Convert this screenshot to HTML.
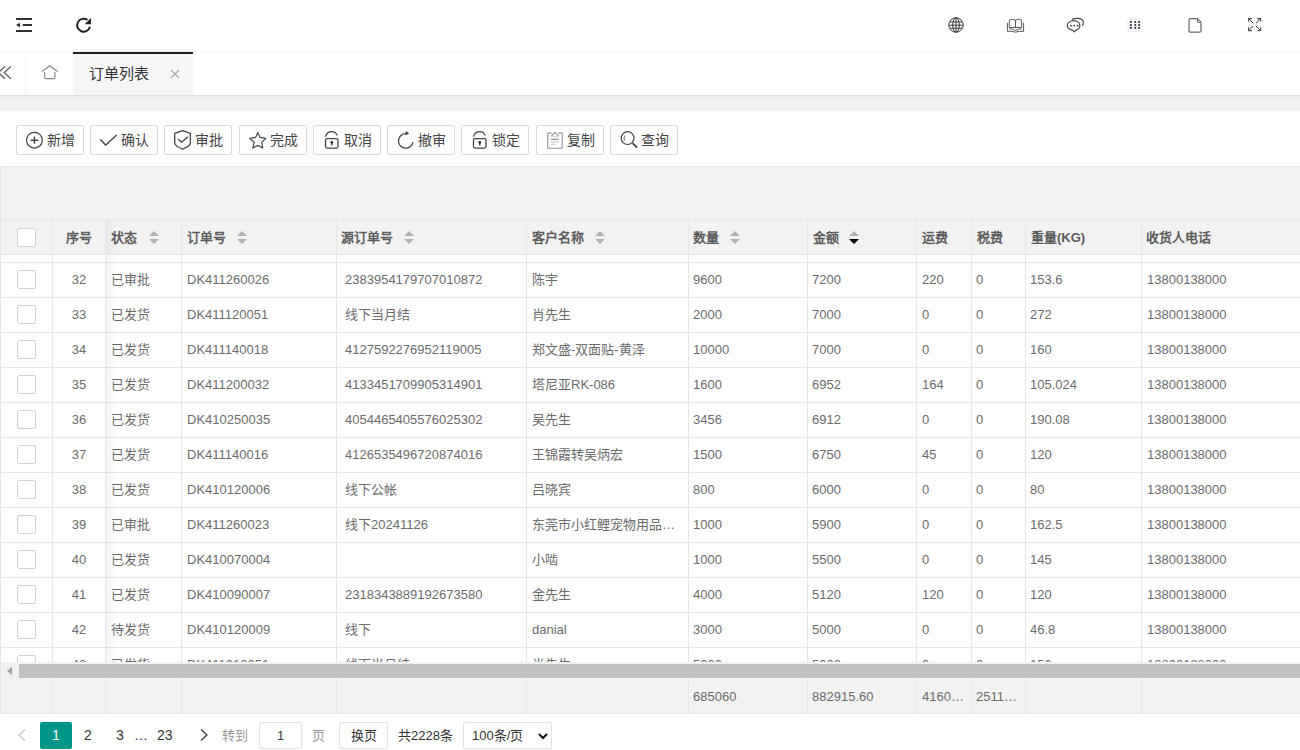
<!DOCTYPE html>
<html lang="zh-CN">
<head>
<meta charset="utf-8">
<title>订单列表</title>
<style>
*{margin:0;padding:0;box-sizing:border-box}
html,body{width:1300px;height:750px;overflow:hidden;background:#f2f2f2;font-family:"Liberation Sans",sans-serif;font-size:13px;color:#666}
svg{display:block;overflow:visible}
i,b,em,s{font-style:normal;text-decoration:none}
.a{position:absolute}
#hdr{position:absolute;left:0;top:0;width:1300px;height:52px;background:#fff;border-bottom:1px solid #f6f6f6}
#tabs{position:absolute;left:0;top:52px;width:1300px;height:44px;background:#fff;border-bottom:1px solid #e0e0e0;box-shadow:0 1px 2px rgba(0,0,0,.04)}
#tabs .lft{position:absolute;left:0;top:0;width:26px;height:43px;border-right:1px solid #f3f3f3}
#tabs .lft svg{position:absolute;left:0;top:14px}
#tabs .home{position:absolute;left:26px;top:0;width:47px;height:43px}
#tabs .home svg{position:absolute;left:15px;top:12px}
#tabs .cur{position:absolute;left:73px;top:0;width:120px;height:43px;background:#f6f6f6;border-top:2px solid #1f222b}
#tabs .cur>span{position:absolute;left:16px;top:10px;font-size:15px;line-height:20px;color:#333;white-space:nowrap}
#tabs .cur i{position:absolute;left:97px;top:15px}
#tool{position:absolute;left:0;top:111px;width:1300px;height:55px;background:#fff;border-radius:2px 0 0 0}
.btn{position:absolute;top:14px;height:30px;width:68px;border:1px solid #d9d9d9;border-radius:2px;background:#fff}
.btn svg.bi{position:absolute;left:-1px;top:-2px}
.btn>span{position:absolute;left:30px;top:5px;font-size:14px;line-height:18px;color:#444;white-space:nowrap}
#grid{position:absolute;left:0;top:166px;width:1300px;height:548px;background:#fff}
#gline{position:absolute;left:0;top:0;width:1300px;height:548px;border-top:1px solid #e6e6e6;border-left:1px solid #e6e6e6;pointer-events:none}
#gtool{position:absolute;left:0;top:1px;width:1300px;height:53px;background:#f2f2f2;border-bottom:1px solid #e6e6e6}
#thead{position:absolute;left:0;top:54px;width:1301px;height:35px;background:#f2f2f2;border-bottom:1px solid #e6e6e6}
.cb{position:absolute;width:19px;height:19px;border:1px solid #d2d2d2;border-radius:2px;background:#fff}
.th{position:absolute;top:1px;line-height:34px;font-weight:bold;color:#5c5c5c;white-space:nowrap}
.c{text-align:center}
.sort{position:absolute;top:11px;width:10px;height:14px}
.sort s{position:absolute;left:0;width:0;height:0;border-left:5px solid transparent;border-right:5px solid transparent}
.sort .up{top:0;border-bottom:5px solid #b2b2b2}
.sort .dn{top:8px;border-top:5px solid #b2b2b2}
.sort.act .dn{border-top-color:#000}
#tbody{position:absolute;left:0;top:89px;width:1301px;height:407px;overflow:hidden;background:#fff}
#rows{position:absolute;left:0;top:0;width:1301px}
.tr{position:absolute;left:0;width:1301px;height:35px;border-top:1px solid #e6e6e6}
.td{position:absolute;top:0;line-height:34px;white-space:nowrap;color:#6b6b6b}
.vl{position:absolute;top:-35px;width:1px;height:450px;background:#e6e6e6}
#thead .vl{top:0;height:35px}
.fixsh{position:absolute;left:106px;top:0;width:10px;height:100%;background:linear-gradient(90deg,rgba(0,0,0,.045),rgba(0,0,0,0))}
#hscroll{position:absolute;left:0;top:496px;width:1301px;height:16px;background:#f1f1f1}
#hscroll .arr{position:absolute;left:7px;top:5px;width:0;height:0;border-top:4px solid transparent;border-bottom:4px solid transparent;border-right:5px solid #a3a3a3}
#hscroll .thumb{position:absolute;left:19px;top:2px;width:1282px;height:14px;background:#c1c1c1}
#tfoot{position:absolute;left:0;top:512px;width:1301px;height:36px;background:#f2f2f2;border-bottom:1px solid #e6e6e6}
.vl2{position:absolute;top:0;width:1px;height:35px;background:#e6e6e6}
#tfoot .td{line-height:37px}
#pager{position:absolute;left:0;top:714px;width:1300px;height:36px;background:#fff}
#pager .pg{position:absolute;top:15px}
#pager .prev{left:18px}
#pager .next{left:200px}
.curp{position:absolute;left:40px;top:8px;width:32px;height:27px;background:#009688;border-radius:2px;color:#fff;text-align:center;line-height:27px;font-size:14px}
.pn{position:absolute;top:8px;line-height:27px;font-size:14px;color:#333}
.pt{position:absolute;top:8px;line-height:27px;font-size:13px;color:#999}
.inp{position:absolute;left:259px;top:8px;width:43px;height:27px;border:1px solid #e2e2e2;border-radius:2px;text-align:center;line-height:25px;font-size:13px;color:#333}
.go{position:absolute;left:339px;top:8px;width:49px;height:27px;border:1px solid #e2e2e2;border-radius:2px;text-align:center;line-height:25px;font-size:13px;color:#333}
.pcnt{position:absolute;left:398px;top:8px;line-height:27px;font-size:13px;color:#333}
.sel{position:absolute;left:463px;top:8px;width:89px;height:27px;border:1px solid #e2e2e2;border-radius:2px;font-size:13px;color:#333}
.sel>span{position:absolute;left:8px;top:0;line-height:25px}
.sel svg{position:absolute;left:74px;top:10px}
.tofu .cj{font-size:calc(var(--k,1.333)*100%);-webkit-text-stroke:.5px;vertical-align:-.08em}
.tofu .th .cj{-webkit-text-stroke:1.1px}

</style>
</head>
<body>
<div id="hdr"><div class="a" style="left:16px;top:18px"><svg width="16" height="14" viewBox="0 0 16 14"><g fill="#333"><rect x="0" y="0" width="16" height="2"/><rect x="6.7" y="6" width="9.3" height="2"/><rect x="0" y="12" width="16" height="2"/><path d="M0 7L4 4.8V9.2Z"/></g></svg></div><div class="a" style="left:76px;top:17px"><svg width="16" height="16" viewBox="0 0 16 16"><path d="M13.95 9.8A6.5 6.5 0 1 1 11.4 2.9" fill="none" stroke="#222" stroke-width="2"/><path d="M8.6 7.3H15V0.9Z" fill="#222"/></svg></div><div class="a" style="left:948px;top:17px"><svg width="16" height="16" viewBox="0 0 16 16"><g fill="none" stroke="#3a3a3a" stroke-width="1"><circle cx="8" cy="8" r="7.2"/><ellipse cx="8" cy="8" rx="3.3" ry="7.2"/><path d="M0.8 8.2H15.2M2 5H14M2 11.2H14M8 0.8V15.2"/></g></svg></div><div class="a" style="left:1006px;top:18px"><svg width="19" height="15" viewBox="0 0 19 15"><g fill="none" stroke="#555" stroke-width="1"><path d="M3.3 9.4V2.2Q6.4 0.2 9.5 2.2Q12.6 0.2 15.6 2.2V9.4Z"/><path d="M9.5 2.2V10.2"/><path d="M3.3 10.8Q6.5 10.3 9.5 12.6Q12.5 10.3 15.6 10.8"/><path d="M1.4 4.8V13.3Q5.5 12.8 9.5 14.2Q13.5 12.8 17.6 13.3V4.8"/></g></svg></div><div class="a" style="left:1066px;top:17px"><svg width="18" height="16" viewBox="0 0 18 16"><g fill="none" stroke="#444" stroke-width="1.15"><path d="M6.5 13.1C3.5 12.6 1.3 10.8 1.3 8.5C1.3 5.8 4.1 3.7 7.6 3.7C11.1 3.7 13.9 5.8 13.9 8.5C13.9 10.8 11.8 12.6 9.9 13.1L8.2 15Z"/><path d="M5.8 2.6Q7.8 1.3 11 1.3Q17.4 1.4 17.4 5.4Q17.4 7.4 15.9 8.6"/></g><g fill="#333"><circle cx="4.9" cy="8.6" r="0.95"/><circle cx="8.3" cy="8.6" r="0.95"/><circle cx="11.7" cy="8.6" r="0.95"/></g></svg></div><div class="a" style="left:1127px;top:17px"><svg width="16" height="16" viewBox="0 0 16 16"><rect x="0.9" y="2.4" width="14.2" height="12" fill="none" stroke="#ececf0" stroke-width="0.9"/><g fill="#e0dde6"><rect x="3" y="0.8" width="1.6" height="1.8"/><rect x="7.5" y="0.8" width="1.6" height="1.8"/><rect x="11.3" y="0.8" width="1.6" height="1.8"/></g><g fill="#2a2a3a"><rect x="3" y="4" width="1.8" height="1.8"/><rect x="7.4" y="4" width="1.8" height="1.8"/><rect x="11.2" y="4" width="1.8" height="1.8"/><rect x="3" y="7.1" width="1.8" height="1.8"/><rect x="7.4" y="7.1" width="1.8" height="1.8"/><rect x="11.2" y="7.1" width="1.8" height="1.8"/><rect x="3" y="10" width="1.8" height="1.8"/><rect x="7.4" y="10" width="1.8" height="1.8"/><rect x="11.2" y="10" width="1.8" height="1.8"/></g></svg></div><div class="a" style="left:1188px;top:18px"><svg width="14" height="15" viewBox="0 0 14 15"><path d="M1 2Q1 0.7 2.3 0.7H9.5L13 4.2V12.8Q13 14.1 11.7 14.1H2.3Q1 14.1 1 12.8Z" fill="none" stroke="#666" stroke-width="1.2"/><path d="M9.5 0.7V4.3H13" fill="none" stroke="#666" stroke-width="1"/></svg></div><div class="a" style="left:1248px;top:18px"><svg width="14" height="14" viewBox="0 0 14 14"><g fill="none" stroke="#3a3a3a" stroke-width="1"><path d="M0.6 3.7V0.6H4M0.6 0.6L5.3 5.3"/><path d="M9.2 0.6H12.7V3.7M12.7 0.6L7.9 5.3"/><path d="M0.6 9.3V12.7H4M0.6 12.7L5.3 7.9"/><path d="M12.7 9.3V12.7H9.2M12.7 12.7L7.9 7.9"/></g></svg></div></div>
<div id="tabs"><div class="lft"><svg width="12" height="14" viewBox="0 0 12 14"><g fill="none" stroke="#555" stroke-width="1.3"><path d="M4.9 0.4L-1.5 6.6L4.9 12.7"/><path d="M10.8 0.4L4.4 6.6L10.8 12.7"/></g></svg></div><div class="home"><svg width="18" height="16" viewBox="0 0 18 16"><g fill="none" stroke="#888" stroke-width="1.2"><path d="M1.1 7.6L8.75 1.7L16.6 7.6"/><path d="M3.6 8V13.5Q3.6 14.7 4.8 14.7H12.7Q13.9 14.7 13.9 13.5V8"/></g></svg></div><div class="cur"><span><span class="cj">订单列表</span></span><i><svg width="10" height="10" viewBox="0 0 10 10"><path d="M1 1L9 9M9 1L1 9" stroke="#aaa" stroke-width="1.1"/></svg></i></div></div>
<div id="tool"><div class="btn" style="left:16px"><svg class="bi" width="68" height="30" viewBox="0 0 68 30"><circle cx="18.4" cy="16.2" r="7.9" fill="none" stroke="#444" stroke-width="1.2"/><path d="M18.4 12.6V19.7M14.6 16.2H22.3" stroke="#444" stroke-width="1.4"/></svg><span><span class="cj">新增</span></span></div><div class="btn" style="left:90px"><svg class="bi" width="68" height="30" viewBox="0 0 68 30"><path d="M10.3 15.4L15.7 21L26.7 11" fill="none" stroke="#444" stroke-width="1.4"/></svg><span><span class="cj">确认</span></span></div><div class="btn" style="left:164px"><svg class="bi" width="68" height="30" viewBox="0 0 68 30"><path d="M18.7 6.7L26.4 9.3V18.8Q26.4 22.3 18.7 25.1Q11 22.3 10.7 18.8V9.3Z" fill="none" stroke="#444" stroke-width="1.3" stroke-linejoin="round"/><path d="M14.1 15.3L17.6 18.2L23.9 12.8" fill="none" stroke="#444" stroke-width="1.4"/></svg><span><span class="cj">审批</span></span></div><div class="btn" style="left:239px"><svg class="bi" width="68" height="30" viewBox="0 0 68 30"><path d="M18.8 8.5L21 13.4L26.8 14.3L22.7 18.4L23.8 24L18.8 21.4L13.9 24L15.2 18.4L10.7 14.3L16.6 13.4Z" fill="none" stroke="#444" stroke-width="1.2" stroke-linejoin="round"/></svg><span><span class="cj">完成</span></span></div><div class="btn" style="left:313px"><svg class="bi" width="68" height="30" viewBox="0 0 68 30"><path d="M12.7 12.6A6 6 0 0 1 24.2 11.5" fill="none" stroke="#444" stroke-width="1.3"/><rect x="12.5" y="14.6" width="12.5" height="9.5" rx="1.5" fill="none" stroke="#444" stroke-width="1.3"/><circle cx="18.8" cy="18.2" r="1.3" fill="#222"/><path d="M18.8 18.5V21.4" stroke="#222" stroke-width="1.2"/></svg><span><span class="cj">取消</span></span></div><div class="btn" style="left:387px"><svg class="bi" width="68" height="30" viewBox="0 0 68 30"><path d="M26 18A7.3 7.3 0 1 1 19 9.6" fill="none" stroke="#444" stroke-width="1.3"/><path d="M18.7 7.1L22.2 9.3L18.7 11.6Z" fill="#444"/></svg><span><span class="cj">撤审</span></span></div><div class="btn" style="left:461px"><svg class="bi" width="68" height="30" viewBox="0 0 68 30"><path d="M12.7 12.6A6 6 0 0 1 24.2 11.5" fill="none" stroke="#444" stroke-width="1.3"/><rect x="12.5" y="14.6" width="12.5" height="9.5" rx="1.5" fill="none" stroke="#444" stroke-width="1.3"/><circle cx="18.8" cy="18.2" r="1.3" fill="#222"/><path d="M18.8 18.5V21.4" stroke="#222" stroke-width="1.2"/></svg><span><span class="cj">锁定</span></span></div><div class="btn" style="left:536px"><svg class="bi" width="68" height="30" viewBox="0 0 68 30"><path d="M15.6 9.1H11.7V24.2H26.2V9.1H22.2" fill="none" stroke="#9a94a6" stroke-width="1.1"/><path d="M15.3 12.2L19 8.2L22.6 12.2" fill="none" stroke="#8a8a9a" stroke-width="1.1"/><path d="M15.6 12.8H22.6M15.2 18H22.6M15.2 20.3H20" stroke="#c8c8c8" stroke-width="1"/><path d="M15 15.3H22.6" stroke="#777" stroke-width="1"/></svg><span><span class="cj">复制</span></span></div><div class="btn" style="left:610px"><svg class="bi" width="68" height="30" viewBox="0 0 68 30"><circle cx="17.6" cy="14.1" r="6.4" fill="none" stroke="#444" stroke-width="1.2"/><path d="M22.6 19.2L27 23.6" stroke="#444" stroke-width="1.9"/><path d="M14.6 11.6Q13.4 14.1 14.6 16.6" fill="none" stroke="#666" stroke-width="0.9"/></svg><span><span class="cj">查询</span></span></div></div>
<div id="grid"><div id="gtool"></div><div id="thead"><div class="cb" style="left:17px;top:8px"></div><b class="th c" style="left:53px;width:52px"><span class="cj">序号</span></b><b class="th" style="left:111px"><span class="cj">状态</span></b><b class="th" style="left:187px"><span class="cj">订单号</span></b><b class="th" style="left:341px"><span class="cj">源订单号</span></b><b class="th" style="left:532px"><span class="cj">客户名称</span></b><b class="th" style="left:693px"><span class="cj">数量</span></b><b class="th" style="left:813px"><span class="cj">金额</span></b><b class="th" style="left:922px"><span class="cj">运费</span></b><b class="th" style="left:977px"><span class="cj">税费</span></b><b class="th" style="left:1031px"><span class="cj">重量</span>(KG)</b><b class="th" style="left:1146px"><span class="cj">收货人电话</span></b><i class="sort" style="left:148.5px"><s class="up"></s><s class="dn"></s></i><i class="sort" style="left:237px"><s class="up"></s><s class="dn"></s></i><i class="sort" style="left:404px"><s class="up"></s><s class="dn"></s></i><i class="sort" style="left:594.5px"><s class="up"></s><s class="dn"></s></i><i class="sort" style="left:730.4px"><s class="up"></s><s class="dn"></s></i><i class="sort act" style="left:848.7px"><s class="up"></s><s class="dn"></s></i><div class="vl" style="left:52px"></div><div class="vl" style="left:105px"></div><div class="vl" style="left:181px"></div><div class="vl" style="left:336px"></div><div class="vl" style="left:526px"></div><div class="vl" style="left:688px"></div><div class="vl" style="left:807px"></div><div class="vl" style="left:916px"></div><div class="vl" style="left:971px"></div><div class="vl" style="left:1025px"></div><div class="vl" style="left:1141px"></div><div class="fixsh"></div></div><div id="tbody"><div id="rows"><div class="tr" style="top:7px"><div class="cb" style="left:17px;top:7px"></div><span class="td c" style="left:53px;width:52px">32</span><span class="td" style="left:111px"><span class="cj">已审批</span></span><span class="td" style="left:187px">DK411260026</span><span class="td" style="left:345px">2383954179707010872</span><span class="td" style="left:532px"><span class="cj">陈宇</span></span><span class="td" style="left:693px">9600</span><span class="td" style="left:812px">7200</span><span class="td" style="left:922px">220</span><span class="td" style="left:976px">0</span><span class="td" style="left:1030px">153.6</span><span class="td" style="left:1147px">13800138000</span></div><div class="tr" style="top:42px"><div class="cb" style="left:17px;top:7px"></div><span class="td c" style="left:53px;width:52px">33</span><span class="td" style="left:111px"><span class="cj">已发货</span></span><span class="td" style="left:187px">DK411120051</span><span class="td" style="left:345px"><span class="cj">线下当月结</span></span><span class="td" style="left:532px"><span class="cj">肖先生</span></span><span class="td" style="left:693px">2000</span><span class="td" style="left:812px">7000</span><span class="td" style="left:922px">0</span><span class="td" style="left:976px">0</span><span class="td" style="left:1030px">272</span><span class="td" style="left:1147px">13800138000</span></div><div class="tr" style="top:77px"><div class="cb" style="left:17px;top:7px"></div><span class="td c" style="left:53px;width:52px">34</span><span class="td" style="left:111px"><span class="cj">已发货</span></span><span class="td" style="left:187px">DK411140018</span><span class="td" style="left:345px">4127592276952119005</span><span class="td" style="left:532px"><span class="cj">郑文盛</span>-<span class="cj">双面贴</span>-<span class="cj">黄泽</span></span><span class="td" style="left:693px">10000</span><span class="td" style="left:812px">7000</span><span class="td" style="left:922px">0</span><span class="td" style="left:976px">0</span><span class="td" style="left:1030px">160</span><span class="td" style="left:1147px">13800138000</span></div><div class="tr" style="top:112px"><div class="cb" style="left:17px;top:7px"></div><span class="td c" style="left:53px;width:52px">35</span><span class="td" style="left:111px"><span class="cj">已发货</span></span><span class="td" style="left:187px">DK411200032</span><span class="td" style="left:345px">4133451709905314901</span><span class="td" style="left:532px"><span class="cj">塔尼亚</span>RK-086</span><span class="td" style="left:693px">1600</span><span class="td" style="left:812px">6952</span><span class="td" style="left:922px">164</span><span class="td" style="left:976px">0</span><span class="td" style="left:1030px">105.024</span><span class="td" style="left:1147px">13800138000</span></div><div class="tr" style="top:147px"><div class="cb" style="left:17px;top:7px"></div><span class="td c" style="left:53px;width:52px">36</span><span class="td" style="left:111px"><span class="cj">已发货</span></span><span class="td" style="left:187px">DK410250035</span><span class="td" style="left:345px">4054465405576025302</span><span class="td" style="left:532px"><span class="cj">吴先生</span></span><span class="td" style="left:693px">3456</span><span class="td" style="left:812px">6912</span><span class="td" style="left:922px">0</span><span class="td" style="left:976px">0</span><span class="td" style="left:1030px">190.08</span><span class="td" style="left:1147px">13800138000</span></div><div class="tr" style="top:182px"><div class="cb" style="left:17px;top:7px"></div><span class="td c" style="left:53px;width:52px">37</span><span class="td" style="left:111px"><span class="cj">已发货</span></span><span class="td" style="left:187px">DK411140016</span><span class="td" style="left:345px">4126535496720874016</span><span class="td" style="left:532px"><span class="cj">王锦霞转吴炳宏</span></span><span class="td" style="left:693px">1500</span><span class="td" style="left:812px">6750</span><span class="td" style="left:922px">45</span><span class="td" style="left:976px">0</span><span class="td" style="left:1030px">120</span><span class="td" style="left:1147px">13800138000</span></div><div class="tr" style="top:217px"><div class="cb" style="left:17px;top:7px"></div><span class="td c" style="left:53px;width:52px">38</span><span class="td" style="left:111px"><span class="cj">已发货</span></span><span class="td" style="left:187px">DK410120006</span><span class="td" style="left:345px"><span class="cj">线下公帐</span></span><span class="td" style="left:532px"><span class="cj">吕晓宾</span></span><span class="td" style="left:693px">800</span><span class="td" style="left:812px">6000</span><span class="td" style="left:922px">0</span><span class="td" style="left:976px">0</span><span class="td" style="left:1030px">80</span><span class="td" style="left:1147px">13800138000</span></div><div class="tr" style="top:252px"><div class="cb" style="left:17px;top:7px"></div><span class="td c" style="left:53px;width:52px">39</span><span class="td" style="left:111px"><span class="cj">已审批</span></span><span class="td" style="left:187px">DK411260023</span><span class="td" style="left:345px"><span class="cj">线下</span>20241126</span><span class="td" style="left:532px"><span class="cj">东莞市小红鲤宠物用品</span>…</span><span class="td" style="left:693px">1000</span><span class="td" style="left:812px">5900</span><span class="td" style="left:922px">0</span><span class="td" style="left:976px">0</span><span class="td" style="left:1030px">162.5</span><span class="td" style="left:1147px">13800138000</span></div><div class="tr" style="top:287px"><div class="cb" style="left:17px;top:7px"></div><span class="td c" style="left:53px;width:52px">40</span><span class="td" style="left:111px"><span class="cj">已发货</span></span><span class="td" style="left:187px">DK410070004</span><span class="td" style="left:345px"></span><span class="td" style="left:532px"><span class="cj">小啮</span></span><span class="td" style="left:693px">1000</span><span class="td" style="left:812px">5500</span><span class="td" style="left:922px">0</span><span class="td" style="left:976px">0</span><span class="td" style="left:1030px">145</span><span class="td" style="left:1147px">13800138000</span></div><div class="tr" style="top:322px"><div class="cb" style="left:17px;top:7px"></div><span class="td c" style="left:53px;width:52px">41</span><span class="td" style="left:111px"><span class="cj">已发货</span></span><span class="td" style="left:187px">DK410090007</span><span class="td" style="left:345px">2318343889192673580</span><span class="td" style="left:532px"><span class="cj">金先生</span></span><span class="td" style="left:693px">4000</span><span class="td" style="left:812px">5120</span><span class="td" style="left:922px">120</span><span class="td" style="left:976px">0</span><span class="td" style="left:1030px">120</span><span class="td" style="left:1147px">13800138000</span></div><div class="tr" style="top:357px"><div class="cb" style="left:17px;top:7px"></div><span class="td c" style="left:53px;width:52px">42</span><span class="td" style="left:111px"><span class="cj">待发货</span></span><span class="td" style="left:187px">DK410120009</span><span class="td" style="left:345px"><span class="cj">线下</span></span><span class="td" style="left:532px">danial</span><span class="td" style="left:693px">3000</span><span class="td" style="left:812px">5000</span><span class="td" style="left:922px">0</span><span class="td" style="left:976px">0</span><span class="td" style="left:1030px">46.8</span><span class="td" style="left:1147px">13800138000</span></div><div class="tr" style="top:392px"><div class="cb" style="left:17px;top:7px"></div><span class="td c" style="left:53px;width:52px">43</span><span class="td" style="left:111px"><span class="cj">已发货</span></span><span class="td" style="left:187px">DK411010051</span><span class="td" style="left:345px"><span class="cj">线下当月结</span></span><span class="td" style="left:532px"><span class="cj">肖先生</span></span><span class="td" style="left:693px">5000</span><span class="td" style="left:812px">5000</span><span class="td" style="left:922px">0</span><span class="td" style="left:976px">0</span><span class="td" style="left:1030px">150</span><span class="td" style="left:1147px">13800138000</span></div></div><div class="vl" style="left:52px"></div><div class="vl" style="left:105px"></div><div class="vl" style="left:181px"></div><div class="vl" style="left:336px"></div><div class="vl" style="left:526px"></div><div class="vl" style="left:688px"></div><div class="vl" style="left:807px"></div><div class="vl" style="left:916px"></div><div class="vl" style="left:971px"></div><div class="vl" style="left:1025px"></div><div class="vl" style="left:1141px"></div><div class="fixsh"></div></div><div id="hscroll"><div class="arr"></div><div class="thumb"></div></div><div id="tfoot"><div class="vl2" style="left:52px"></div><div class="vl2" style="left:105px"></div><div class="vl2" style="left:181px"></div><div class="vl2" style="left:336px"></div><div class="vl2" style="left:526px"></div><div class="vl2" style="left:688px"></div><div class="vl2" style="left:807px"></div><div class="vl2" style="left:916px"></div><div class="vl2" style="left:971px"></div><div class="vl2" style="left:1025px"></div><div class="vl2" style="left:1141px"></div><span class="td" style="left:693px">685060</span><span class="td" style="left:812px">882915.60</span><span class="td" style="left:922px">4160…</span><span class="td" style="left:976px">2511…</span></div><div id="gline"></div></div>
<div id="pager"><i class="pg prev"><svg width="8" height="12" viewBox="0 0 8 12"><path d="M7 0.5L1 6L7 11.5" fill="none" stroke="#c2c2c2" stroke-width="1.2"/></svg></i><em class="curp">1</em><span class="pn" style="left:84px">2</span><span class="pn" style="left:116px">3</span><span class="pn" style="left:134px">…</span><span class="pn" style="left:157px">23</span><i class="pg next"><svg width="8" height="12" viewBox="0 0 8 12"><path d="M1 0.5L7 6L1 11.5" fill="none" stroke="#333" stroke-width="1.2"/></svg></i><span class="pt" style="left:222px"><span class="cj">转到</span></span><div class="inp">1</div><span class="pt" style="left:312px"><span class="cj">页</span></span><div class="go"><span class="cj">换页</span></div><span class="pcnt"><span class="cj">共</span>2228<span class="cj">条</span></span><div class="sel"><span>100<span class="cj">条</span>/<span class="cj">页</span></span><svg width="10" height="7" viewBox="0 0 10 7"><path d="M1 1L5 5L9 1" fill="none" stroke="#111" stroke-width="2"/></svg></div></div>
<script>(function(){var d=document,s=d.createElement('span');s.style.cssText='position:absolute;left:-9999px;top:0;font-size:100px;line-height:1;white-space:nowrap';s.textContent='\u8ba2\u5355\u5217\u8868';d.body.appendChild(s);var w=s.getBoundingClientRect().width;d.body.removeChild(s);if(w>150&&w<380){var r=d.documentElement;r.style.setProperty('--k',(400/w).toFixed(3));r.className+=' tofu';}})();
</script>
</body>
</html>
